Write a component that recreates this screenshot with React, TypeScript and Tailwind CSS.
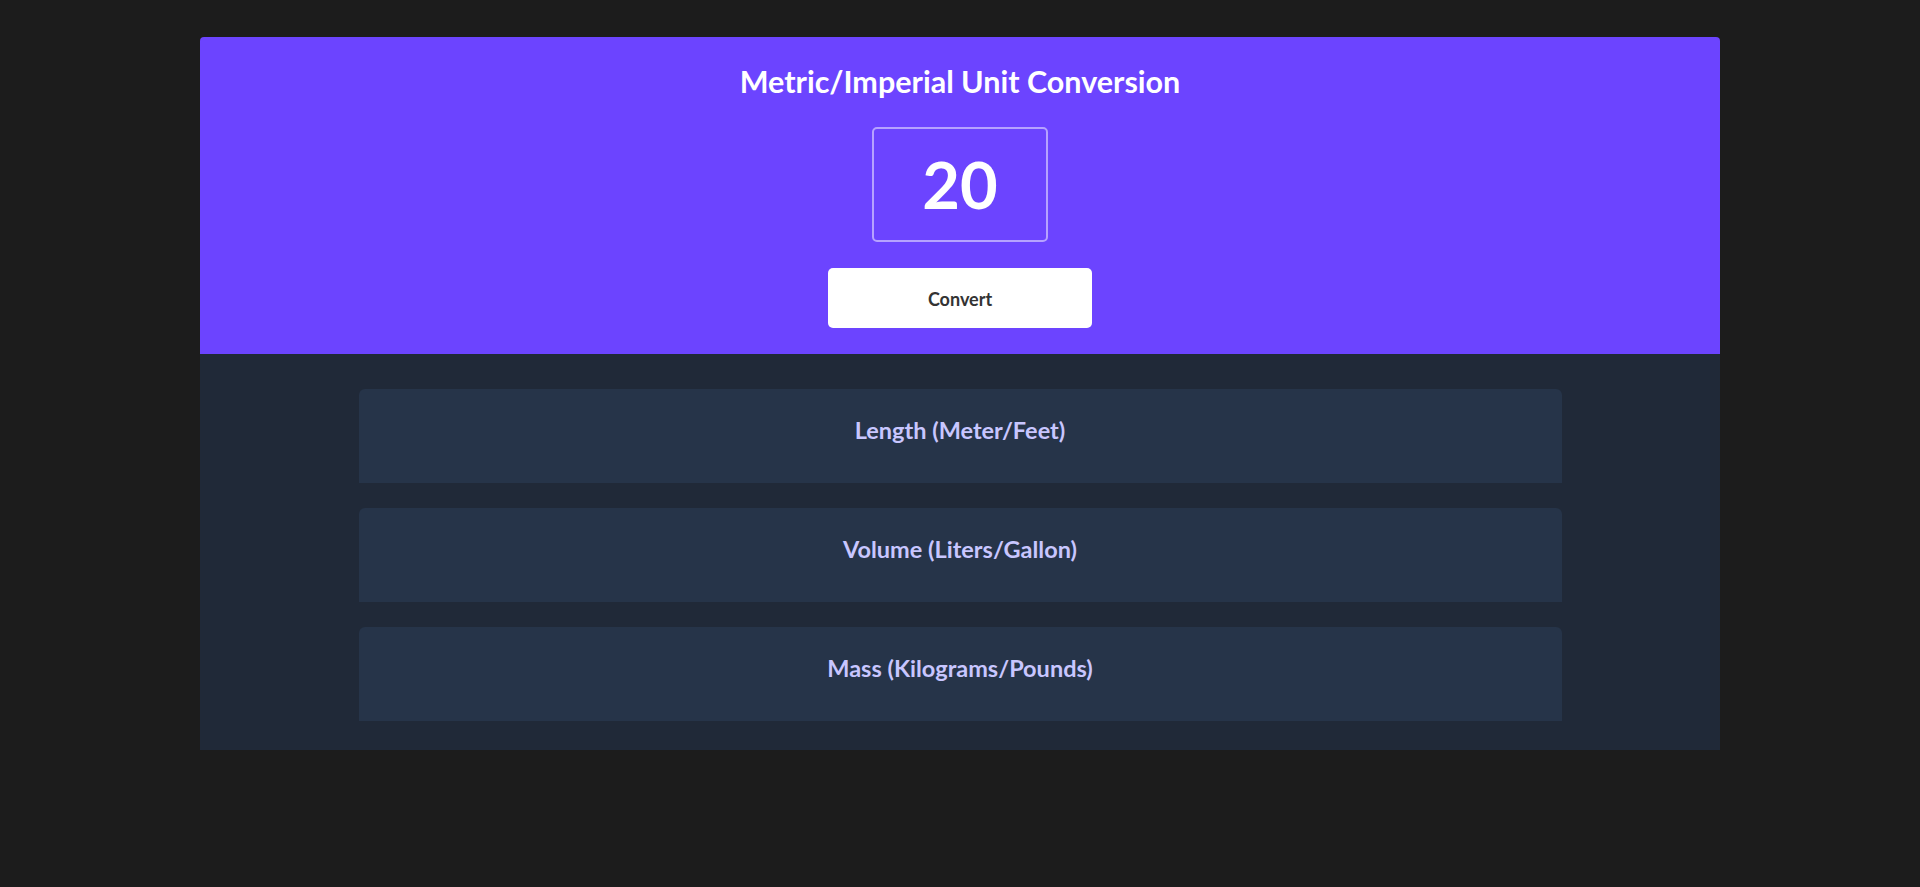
import React from "react";

const font = { fontFamily: "Lato, 'Noto Sans', sans-serif" };

export default function App() {
  const items = ["Length (Meter/Feet)", "Volume (Liters/Gallon)", "Mass (Kilograms/Pounds)"];
  return (
    <div className="min-h-[887px] w-full bg-[#1c1c1c] pt-[37px]" style={font}>
      <div className="mx-auto w-[1520px] overflow-hidden rounded-t-[4px]">
        <div className="flex flex-col items-center bg-[#6c44ff] pt-[26px] pb-[26px]">
          <h1 className="text-[30.5px] font-bold leading-[36px] text-white">Metric/Imperial Unit Conversion</h1>
          <div className="mt-[28px] flex h-[115px] w-[176px] items-center justify-center rounded-[5px] border-2 border-white/50">
            <span className="text-[65px] font-bold leading-none text-white">20</span>
          </div>
          <button className="mt-[26px] h-[60px] w-[264px] rounded-[5px] bg-white pt-[2px] text-[18px] font-bold text-[#333333]">
            Convert
          </button>
        </div>
        <div className="flex flex-col gap-[25px] bg-[#202938] pt-[35px] pb-[29px]">
          {items.map((t) => (
            <div key={t} className="mx-auto h-[94px] w-[1203px] rounded-t-[6px] bg-[#263449] pt-[28px] text-center">
              <span className="text-[23.5px] font-bold leading-[26px] text-[#c8c6ff]">{t}</span>
            </div>
          ))}
        </div>
      </div>
    </div>
  );
}
